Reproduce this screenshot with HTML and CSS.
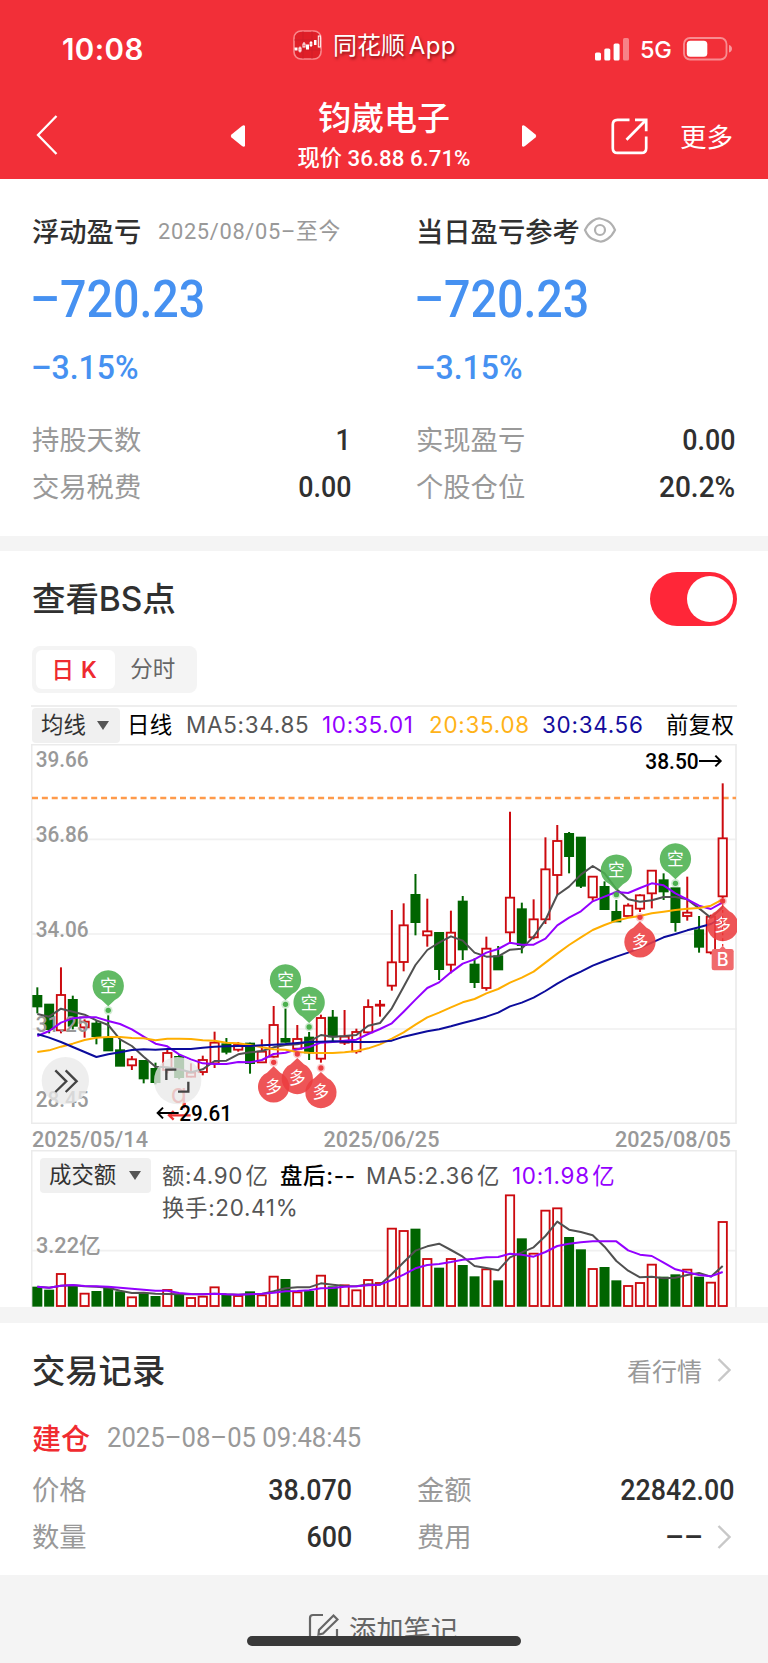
FILE: index.html
```html
<!DOCTYPE html>
<html lang="zh-CN">
<head>
<meta charset="utf-8">
<title>钧崴电子</title>
<link rel="stylesheet" href="styles.css">
</head>
<body>
<header class="header">
  <div class="status">
    <span class="time">10:08</span>
    <span class="app">
      <svg width="29" height="30" viewBox="0 0 29 30"><rect x="1" y="1" width="27" height="28" rx="7" fill="#df1f28" stroke="#f9888c" stroke-width="1.6"/><path d="M1 10H28M1 20H28M10 1V29M19 1V29" stroke="#c8202a" stroke-width=".6"/><g fill="#fff"><rect x="1.5" y="17.5" width="3" height="3"/><rect x="13" y="14.500" width="3" height="5"/><rect x="21" y="10" width="2.500" height="5"/></g><g fill="none" stroke="#fff"><rect x="6" y="18" width="2" height="3"/><path d="M7 16.500v6M11 12v2M18 11v6"/><rect x="10" y="14" width="2" height="3"/><rect x="17.200" y="12.500" width="1.600" height="3"/><rect x="25.300" y="6" width="2" height="11"/></g></svg>
      <span class="app-name">同花顺 <span>App</span></span>
    </span>
    <span class="signal">
      <svg width="35" height="23" viewBox="0 0 35 23" fill="#fff"><rect y="14.500" width="6" height="8" rx="1.600"/><rect x="9.300" y="10.500" width="6" height="12" rx="1.600"/><rect x="18.600" y="5.500" width="6" height="17" rx="1.600"/><rect x="28" y="0" width="6" height="22.500" rx="1.600" opacity=".4"/></svg>
      <span class="net">5G</span>
      <svg width="50" height="24" viewBox="0 0 50 24"><rect x="1" y="1" width="42.500" height="21.500" rx="6" fill="none" stroke="#fff" stroke-opacity=".45" stroke-width="1.800"/><rect x="3.800" y="3.800" width="20.500" height="16" rx="3.500" fill="#fff"/><path d="M46 8q3 1 3 3.800t-3 3.800z" fill="#fff" opacity=".5"/></svg>
    </span>
  </div>
  <div class="nav">
    <svg class="back" width="22" height="40" viewBox="0 0 22 40"><path d="M20.500 1L2 20L20.500 39" fill="none" stroke="#fff" stroke-width="2.300"/></svg>
    <svg class="prev" width="16" height="24" viewBox="0 0 16 24"><path d="M15 2v20q-1 1.500-3 0L1.500 13.500q-1.500-1.500 0-3L12 2q2-1.500 3 0z" fill="#fff"/></svg>
    <div class="stock"><h1>钧崴电子</h1><p><span>现价</span> 36.88 6.71%</p></div>
    <svg class="next" width="16" height="24" viewBox="0 0 16 24"><path d="M1 2v20q1 1.500 3 0L14.500 13.500q1.500-1.500 0-3L4 2q-2-1.500-3 0z" fill="#fff"/></svg>
    <svg class="share" width="37" height="37" viewBox="0 0 37 37" fill="none" stroke="#fff" stroke-width="2.700"><path d="M18.500 1.800H6.500q-4.700 0-4.700 4.700v23.700q0 4.700 4.700 4.700h24q4.700 0 4.700-4.700V18.500M24 1.800h11.200v11.500M35 2L15.500 21.800"/></svg>
    <span class="more">更多</span>
  </div>
</header>

<section class="summary">
  <div class="col">
    <h2>浮动盈亏<small class="din">2025/08/05–至今</small></h2>
    <div class="big"><span class="din">–720.23</span></div>
    <div class="pct"><span class="din">–3.15%</span></div>
    <div class="row"><span>持股天数</span><b class="din">1</b></div>
    <div class="row"><span>交易税费</span><b class="din">0.00</b></div>
  </div>
  <div class="col">
    <h2>当日盈亏参考<svg width="34" height="26" viewBox="0 0 34 26" fill="none" stroke="#b0b0b0" stroke-width="2.200"><path d="M2 13q3-6 7.500-9T17 1.500T24.500 4T32 13q-3 6-7.500 9T17 24.500T9.500 22T2 13z"/><circle cx="17" cy="13" r="5"/></svg></h2>
    <div class="big"><span class="din">–720.23</span></div>
    <div class="pct"><span class="din">–3.15%</span></div>
    <div class="row"><span>实现盈亏</span><b class="din">0.00</b></div>
    <div class="row"><span>个股仓位</span><b class="din wide">20.2%</b></div>
  </div>
</section>

<section class="chart">
  <div class="chart-head"><h3>查看BS点</h3><span class="toggle"><i></i></span></div>
  <div class="tabs"><span class="on">日<em>K</em></span><span>分时</span></div>
  <div class="legend">
    <span class="select">均线<i></i></span>
    <span class="black">日线</span>
    <span>MA5:34.85</span>
    <span class="purple">10:35.01</span>
    <span class="orange">20:35.08</span>
    <span class="navy">30:34.56</span>
    <span class="black">前复权</span>
  </div>
  <svg class="price" width="706" height="380" viewBox="33 12 2118 1140">
    <g stroke="#f0f0f0" stroke-width="5" fill="none"><path d="M33 298H2151M33 582H2151M33 867H2151"/><rect x="35" y="14" width="2113" height="1136" stroke="#ebebeb"/></g>
    <path d="M36 174H2148" stroke="#ff9a4a" stroke-width="7" stroke-dasharray="18 11.600"/>
    <g id="candles"></g>
    <g class="axis">
      <text x="47" y="82" textLength="159" lengthAdjust="spacingAndGlyphs">39.66</text>
      <text x="47" y="307" textLength="159" lengthAdjust="spacingAndGlyphs">36.86</text>
      <text x="47" y="592" textLength="159" lengthAdjust="spacingAndGlyphs">34.06</text>
      <text x="47" y="877" textLength="159" lengthAdjust="spacingAndGlyphs">31.25</text>
      <text x="47" y="1102" textLength="159" lengthAdjust="spacingAndGlyphs">28.45</text>
    </g>
    <g id="averages"></g>
    <g id="signals"></g>
    <g class="buy"><path d="M2108 476V618" stroke="#e33" stroke-width="4" stroke-dasharray="8 9"/><path d="M2098 628l10-11l10 11z"/><rect x="2075" y="627" width="66" height="64" rx="7"/><text x="2108" y="679" text-anchor="middle">B</text></g>
    <g class="float"><text class="q" x="477" y="1088" text-anchor="middle">q</text><path class="redarrow" d="M512 1126H447M461 1113L447 1126L461 1139M494 1088V1100"/><circle cx="136" cy="1022" r="71"/><circle cx="473" cy="1022" r="71"/><path d="M106 991L139 1024L106 1056M137 991L170 1024L137 1056M439 1020V989H469M505 1025V1055H474"/></g>
    <g class="mark"><text x="478" y="1144" textLength="158" lengthAdjust="spacingAndGlyphs">29.61</text><path d="M476 1119H413M429 1103L413 1119L429 1135"/><text x="1876" y="87" textLength="160" lengthAdjust="spacingAndGlyphs">38.50</text><path d="M2037 63H2102M2086 47L2102 63L2086 79"/></g>
  </svg>
  <div class="dates"><span>2025/05/14</span><span>2025/06/25</span><span>2025/08/05</span></div>
  <div class="volume">
    <svg width="706" height="158" viewBox="33 28 2118 474">
      <path d="M33 330H2148" stroke="#f0f0f0" stroke-width="5"/>
      <path d="M35 500V30H2148V500" fill="none" stroke="#ebebeb" stroke-width="5"/>
      <g id="bars"></g>
      <g class="axis"><text x="48" y="337" textLength="194" lengthAdjust="spacingAndGlyphs">3.22亿</text></g>
      <g id="bar-averages"></g>
    </svg>
    <div class="volume-legend">
      <span class="select">成交额<i></i></span>
      <span>额:4.90<em>亿</em></span>
      <span class="black bold">盘后:--</span>
      <span>MA5:2.36<em>亿</em></span>
      <span class="purple">10:1.98<em>亿</em></span>
    </div>
    <div class="turnover">换手:20.41%</div>
  </div>
</section>

<section class="records">
  <div class="records-head"><h3>交易记录</h3><a>看行情<svg width="14" height="24" viewBox="0 0 14 24"><path d="M1.500 1L12.500 12L1.500 23" fill="none" stroke="#c8c8c8" stroke-width="2.400"/></svg></a></div>
  <div class="event"><b>建仓</b><span>2025–08–05 09:48:45</span></div>
  <div class="pair">
    <div class="row"><span>价格</span><b class="din">38.070</b></div>
    <div class="row"><span>金额</span><b class="din">22842.00</b></div>
    <div class="row"><span>数量</span><b class="din">600</b></div>
    <div class="row"><span>费用</span><b class="fee">––<svg width="14" height="24" viewBox="0 0 14 24"><path d="M1.500 1L12.500 12L1.500 23" fill="none" stroke="#c8c8c8" stroke-width="2.400"/></svg></b></div>
  </div>
</section>

<footer class="footer">
  <svg width="31" height="32" viewBox="0 0 31 32" fill="none" stroke="#666" stroke-width="2.200"><path d="M15 2H5Q2 2 2 5V26Q2 29 5 29H26Q29 29 29 26V16M25.500 2.500l4 4L15 20.500l-4.500 1l.5-4.500z"/></svg>
  <span>添加笔记</span>
  <i class="home"></i>
</footer>
<script src="chart.js"></script>
</body>
</html>
```
FILE: styles.css
```css
* { box-sizing: border-box; margin: 0; padding: 0; }
body { width: 768px; height: 1663px; overflow: hidden; background: #fff; color: #303030; font-family: Roboto, "Noto Sans CJK SC", sans-serif; }
svg { display: block; flex: none; }
i, em { font-style: normal; }
span, b, h1, h2, h3, p, small { white-space: nowrap; }
.din { display: inline-block; transform: scaleX(.91); transform-origin: left center; }

.header { height: 179px; background: #f22f38; color: #fff; }
.status { height: 90px; padding: 8px 35px 0 62px; display: grid; grid-template-columns: 231px 1fr auto; align-items: center; font-family: Inter, "Noto Sans CJK SC", sans-serif; }
.time { font-size: 29.5px; font-weight: 600; letter-spacing: .4px; }
.app { display: flex; align-items: center; gap: 11px; margin-top: -8px; }
.app-name { font-size: 24px; line-height: 30px; text-shadow: 1px 2px 3px rgba(60, 0, 0, .6); word-spacing: -3px; padding-top: 1px; }
.app-name span { letter-spacing: .4px; }
.signal { display: flex; align-items: center; gap: 10px; }
.net { font-size: 23.5px; font-weight: 500; letter-spacing: -.2px; width: 33px; }
.nav { height: 89px; display: flex; align-items: flex-start; }
.back { margin: 25px 0 0 36px; }
.prev { margin: 34px 0 0 172px; }
.stock { width: 276px; text-align: center; }
.stock h1 { margin-top: 7px; font-size: 33px; line-height: 44px; font-weight: 500; }
.stock p { font-size: 22.5px; line-height: 32px; margin-top: 1px; font-weight: 500; transform: scaleX(.99); }
.next { margin: 34px 0 0 -1px; }
.share { margin: 28px 0 0 74px; }
.more { font-size: 26.5px; line-height: 36px; margin: 30px 0 0 32px; }

.summary { height: 372px; padding: 30px 33px 0 32px; display: grid; grid-template-columns: 319px 319px; gap: 65px; border-bottom: 15px solid #f4f4f4; }
.summary h2 { height: 42px; display: flex; align-items: center; font-size: 27.3px; font-weight: 500; }
.summary h2 small { font-size: 22.5px; font-weight: 400; color: #999; margin-left: 17px; letter-spacing: .7px; transform: scaleX(.97); position: relative; top: -1px; }
.summary h2 svg { margin-left: 3px; }
.big { height: 96px; line-height: 98px; margin-left: -2px; font-size: 51.5px; font-weight: 500; color: #4691f1; }
.pct { height: 41px; line-height: 41px; margin-left: -1px; font-size: 33.5px; font-weight: 500; color: #4691f1; margin-bottom: 29px; }
.pct .din { transform: scaleX(.955); }
.big .din { transform: scaleX(.905); }
.row { height: 46.5px; display: flex; align-items: center; justify-content: space-between; font-size: 27.3px; color: #999; }
.row > span { margin-top: -4px; }
.row b { font-size: 29.5px; font-weight: 500; color: #303030; }
.row .din { transform-origin: right center; }
.row .wide { transform: scaleX(.95); }

.chart { height: 772px; padding: 0 31px; border-bottom: 16px solid #f4f4f4; }
.chart-head { height: 95px; padding: 0 0 0 1px; display: flex; align-items: center; justify-content: space-between; }
.chart-head h3 { font-family: Inter, "Noto Sans CJK SC", sans-serif; font-weight: 500; font-size: 33.5px; letter-spacing: -.1px; margin-top: -4px; }
.toggle { width: 87px; height: 54px; border-radius: 27px; background: #ff2638; padding: 4px; display: flex; justify-content: flex-end; margin-top: 1px; }
.toggle i { width: 46px; height: 46px; border-radius: 50%; background: #fff; }
.tabs { width: 165px; height: 47px; margin-left: 1px; padding: 4px; border-radius: 8px; background: #f4f4f4; display: flex; font-size: 22.5px; line-height: 39px; color: #666; text-align: center; }
.tabs span { flex: 1; padding-right: 2px; }
.tabs .on { background: #fff; color: #ee2a30; border-radius: 6px; font-weight: 500; }
.tabs em { margin-left: 7px; font-family: Inter; font-weight: 600; }
.legend { height: 39px; margin-top: 12px; padding-left: 1px; border-top: 2px solid #eee; display: grid; grid-template-columns: 95px 59px 136px 107px 113px 124px 1fr; align-items: center; font: 22.4px/30px Inter, "Noto Sans CJK SC", sans-serif; color: #555; letter-spacing: .75px; }
.legend > span:not(.select) { margin-top: -2px; }
.legend .black { letter-spacing: .3px; }
.select { height: 35px; border-radius: 4px; background: #f0f0f0; color: #333; display: flex; align-items: center; gap: 11px; padding: 0 0 2px 9px; width: 88px; letter-spacing: 0; }
.select i { border: 6px solid transparent; border-top: 9px solid #555; border-bottom: 0; margin-top: 2px; }
.black { color: #000; }
.bold { font-weight: 500; }
.purple { color: #9400ff; }
.orange { color: #ffb319; }
.navy { color: #130c9c; }
.axis text { font: 500 66px Roboto, "Noto Sans CJK SC", sans-serif; fill: #999; }
.line { fill: none; stroke-width: 6; stroke-linejoin: round; }
.pin { font: 50px "Noto Sans CJK SC", sans-serif; }
.buy { fill: #f06a6c; }
.buy text { fill: #fff; font: 500 54px Inter, sans-serif; }
.float circle { fill: #e9e9e9; fill-opacity: .78; }
.float path { fill: none; stroke: #444; stroke-width: 7; }
.float .redarrow { stroke: #e33; }
.float .q { fill: #e44; font: 80px Inter, sans-serif; }
.mark text { font: 500 66px Roboto, sans-serif; }
.mark path { fill: none; stroke: #000; stroke-width: 6; }
.dates { height: 26px; padding: 1px 6px 0 1px; display: flex; justify-content: space-between; font-size: 21.6px; line-height: 29px; font-weight: 500; color: #999; letter-spacing: .1px; }
.volume { height: 157px; position: relative; }
.volume > svg { position: absolute; left: 0; top: 0; }
.volume-legend, .turnover { position: relative; font: 22.4px/32px Inter, "Noto Sans CJK SC", sans-serif; color: #555; letter-spacing: .7px; }
.volume-legend { padding: 8px 0 0 9px; display: grid; grid-template-columns: 122px 118px 86px 146px auto; align-items: center; }
.volume-legend em { margin-left: 2.500px; }
.volume-legend .select { width: 111px; height: 35px; gap: 13px; }
.turnover { padding: 0 0 0 131px; margin-top: -1px; }

.records { height: 252px; padding: 0 33px 0 32px; }
.records-head { height: 94px; display: flex; align-items: center; justify-content: space-between; padding: 0 4px 0 0; }
.records-head h3 { font-size: 33.3px; font-weight: 500; margin-top: -4px; }
.records-head a { display: flex; align-items: center; gap: 15px; font-size: 25px; color: #999; }
.event { height: 41px; display: flex; align-items: center; gap: 17px; }
.event b { font-size: 29px; font-weight: 500; color: #f02b30; margin-top: -2px; }
.event span { font-size: 27px; color: #999; transform: scaleX(.95); transform-origin: left; }
.pair { margin-top: 9px; display: grid; grid-template-columns: 320px 318px; column-gap: 65px; }
.fee { display: flex; align-items: center; gap: 14px; padding-right: 4px; }

.footer { height: 88px; position: relative; background: #f4f4f4; display: flex; justify-content: center; padding-top: 38px; gap: 10px; font-size: 27.3px; line-height: 36px; color: #666; }
.footer > span { padding-right: 2px; }
.home { position: absolute; left: 247px; top: 61px; width: 274px; height: 10px; border-radius: 5px; background: #393939; }
```
FILE: chart.js
```js
const STEP = 35.45, X0 = 52;
const at = i => X0 + i * STEP;
const RED = '#cc0a0f', GREEN = '#006400';

// direction, high, body top, body bottom, low
const candles = `g 742 767 800 820|g 793 793 868 880|r 682 765 871 880|g 767 779 858 868|r 838 845 862 893|g 843 850 889 913|g 826 893 932 932|g 898 930 978 978|r 948 958 976 990|g 960 962 1016 1030|g 968 986 1027 1033|r 925 939 990 1000|g 945 950 1012 1018|r 970 998 1010 1012|r 947 960 996 1006|r 875 908 970 984|g 894 912 936 943|r 906 915 929 935|g 908 910 970 1001|r 898 935 967 969|r 798 855 950 953|g 806 896 906 908|r 855 897 926 930|g 876 892 938 960|r 824 834 956 968|g 810 832 890 903|r 810 890 908 915|r 866 876 934 941|r 778 801 877 880|r 780 794 797 830|r 510 667 737 752|r 490 556 666 694|g 402 464 547 586|r 476 574 586 620|g 578 578 688 720|r 512 578 674 700|g 468 484 629 660|g 655 673 727 744|r 590 626 744 752|g 618 648 689 689|r 215 473 577 606|g 488 507 616 640|r 478 538 592 598|r 292 388 538 552|r 255 303 405 465|g 276 281 349 400|g 292 292 438 444|r 410 410 472 482|g 424 440 508 508|g 480 515 545 545|r 490 497 528 530|r 463 466 506 516|r 390 392 460 505|g 400 420 455 480|g 444 444 547 575|r 410 518 528 542|g 528 570 621 638|r 524 530 637 643|r 130 295 469 475`.split('|').map(s => s.split(' '));

const bars = [438,447,398,435,457,451,440,452,468,458,466,446,460,470,466,438,461,464,452,462,406,415,453,451,403,437,432,447,416,425,262,269,264,353,381,353,373,407,384,419,162,293,337,208,201,289,326,383,379,419,434,425,370,408,401,385,408,424,242];

const averages = {
  '#505050': [822,830,806,815,824,841,855,898,918,950,980,982,988,997,988,963,962,943,937,933,922,915,913,905,885,890,888,885,857,849,805,740,675,630,608,589,602,638,650,649,629,626,590,540,465,440,404,378,400,447,478,485,481,471,471,478,505,533,502],
  '#9400ff': [888,873,848,835,832,832,843,852,868,890,911,919,943,958,970,972,972,966,967,960,942,938,928,921,908,906,902,899,882,867,850,815,779,744,727,697,671,658,638,627,608,614,614,596,556,533,514,484,470,456,459,444,430,436,460,478,497,507,487],
  '#ffae00': [936,931,920,911,900,893,891,891,894,895,901,896,896,897,901,902,908,910,915,922,928,929,936,938,939,939,937,933,925,913,896,877,854,832,818,802,787,777,760,747,728,713,695,668,641,615,592,570,555,542,533,528,520,515,510,506,504,497,478],
  '#0c0c9c': [882,893,906,921,936,951,943,937,930,928,929,927,927,927,923,920,919,918,918,916,914,912,909,906,905,904,905,906,906,905,902,890,882,874,868,859,849,840,830,818,799,788,773,753,731,711,695,677,663,650,638,624,608,592,582,571,562,552,532]
};
const barAverages = {
  '#505050': [438,441,435,434,437,438,441,450,457,456,459,460,461,461,461,459,461,462,460,460,452,443,440,440,428,432,436,437,431,432,400,365,330,317,309,328,348,376,382,389,350,335,320,286,243,267,274,284,318,361,390,410,408,413,411,403,397,408,376],
  '#9400ff': [438,441,435,433,436,437,438,441,444,447,450,450,457,460,461,459,461,462,461,459,456,452,451,449,443,442,438,437,434,432,418,402,383,373,370,364,357,354,350,349,339,342,348,334,316,309,305,302,302,302,329,342,346,366,386,395,403,407,394]
};

const box = (i, top, bottom, up) => up
  ? `<rect x="${at(i) - 12.5}" y="${top}" width="25" height="${Math.max(bottom - top, 1)}" fill="#fff" stroke="${RED}" stroke-width="5.5"/>`
  : `<rect x="${at(i) - 15}" y="${top - 2}" width="30" height="${bottom - top + 4}" fill="${GREEN}"/>`;

const put = (id, html) => { document.getElementById(id).innerHTML = html; };

put('candles', candles.map(([d, h, t, b, l], i) =>
  `<path d="M${at(i)} ${h}V${l}" stroke="${d === 'r' ? RED : GREEN}" stroke-width="6"/>` + box(i, +t, +b, d === 'r')).join(''));

put('bars', bars.map((t, i) => box(i, t + 2, 496, candles[i][0] === 'r')).join(''));

const lines = set => Object.entries(set).map(([color, ys]) =>
  `<polyline class="line" stroke="${color}" points="${ys.map((y, i) => at(i) + ',' + y).join(' ')}"/>`).join('');
put('averages', lines(averages));
put('bar-averages', lines(barAverages));

// candle index, circle centre, side of the candle
const signals = [[6, 738, 1], [21, 720, 1], [23, 788, 1], [49, 391, 1], [54, 357, 1], [20, 1040, -1], [22, 1015, -1], [24, 1057, -1], [51, 605, -1], [58, 556, -1]];
put('signals', signals.map(([i, y, side]) => {
  const x = at(i), color = side > 0 ? '#4bb04e' : '#ec3d40';
  return `<g class="pin" fill="${color}"><circle cx="${x}" cy="${y + side * 73}" r="13" opacity=".25"/><circle cx="${x}" cy="${y + side * 73}" r="8"/>
    <path opacity=".88" d="M${x - 20} ${y + side * 42}A47 47 0 1 ${side > 0 ? 1 : 0} ${x + 20} ${y + side * 42}L${x} ${y + side * 61}Z"/>
    <text x="${x}" y="${y + 18}" text-anchor="middle" fill="#fff">${side > 0 ? '空' : '多'}</text></g>`;
}).join(''));
```
